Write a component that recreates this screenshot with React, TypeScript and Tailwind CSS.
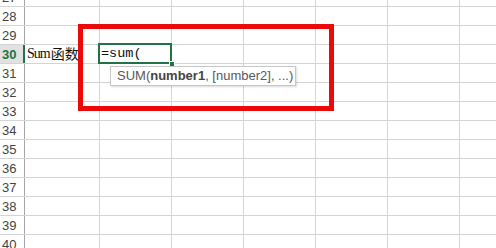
import React from "react";

const rows = [27, 28, 29, 30, 31, 32, 33, 34, 35, 36, 37, 38, 39, 40];

function Row({ n }: { n: number }) {
  const sel = n === 30;
  return (
    <div className="flex h-[19px] border-b border-[#d4d4d4]">
      <div
        className={
          sel
            ? "w-[25px] shrink-0 bg-[#e1e1e1] border-r-2 border-[#217346] pl-[2px] text-[13px] leading-[19px] font-bold text-[#217346]"
            : "w-[25px] shrink-0 border-r border-[#a6a6a6] pl-[2px] text-[13px] leading-[19px] text-[#444]"
        }
        style={{ fontFamily: '"Liberation Sans", Arial, sans-serif' }}
      >
        {n}
      </div>
      <div className="w-[75px] shrink-0 border-r border-[#d4d4d4] pl-[2px] flex items-center overflow-visible whitespace-nowrap relative z-10 text-[#111]">
        {sel && (
          <>
            <span
              className="text-[14px] leading-[18px] tracking-[-1px] pr-[1px]"
              style={{ fontFamily: '"Liberation Serif", serif' }}
            >
              Sum
            </span>
            <span
              className="text-[14px] leading-[18px] translate-y-[-1px]"
              style={{ fontFamily: '"Noto Sans CJK SC", sans-serif' }}
            >
              函数
            </span>
          </>
        )}
      </div>
      <div className="w-[72px] shrink-0 border-r border-[#d4d4d4] relative pl-[1px] flex items-center whitespace-nowrap">
        {sel && (
          <>
            <span
              className="text-[13.5px] leading-[18px] text-[#111]"
              style={{ fontFamily: '"Liberation Mono", "Courier New", monospace' }}
            >
              =sum(
            </span>
            <div className="absolute left-[-2px] top-[-2px] w-[74px] h-[21px] border-2 border-[#217346] z-20">
              <div className="absolute left-[69px] top-[16px] w-[6px] h-[6px] bg-[#217346] border border-white" />
            </div>
          </>
        )}
      </div>
      <div className="w-[72px] shrink-0 border-r border-[#d4d4d4]" />
      <div className="w-[72px] shrink-0 border-r border-[#d4d4d4]" />
      <div className="w-[72px] shrink-0 border-r border-[#d4d4d4]" />
      <div className="w-[72px] shrink-0 border-r border-[#d4d4d4]" />
      <div className="flex-1" />
    </div>
  );
}

export default function App() {
  return (
    <div className="relative w-[496px] h-[248px] overflow-hidden bg-white">
      <div className="mt-[-12px]">
        {rows.map((n) => (
          <Row key={n} n={n} />
        ))}
      </div>
      <div
        className="absolute left-[110px] top-[66px] w-[186px] h-[20px] bg-white border border-[#c6c6c6] shadow-[1px_1px_2px_rgba(0,0,0,0.15)] pl-[6px] text-[13px] leading-[18px] text-[#595959] whitespace-nowrap z-30"
        style={{ fontFamily: '"Liberation Sans", Arial, sans-serif' }}
      >
        SUM(<span className="font-bold text-[#444]">number1</span>, [number2], ...)
      </div>
      <div className="absolute left-[78px] top-[24px] w-[256px] h-[87px] border-[5px] border-[#ea0a0a] z-40" />
    </div>
  );
}
